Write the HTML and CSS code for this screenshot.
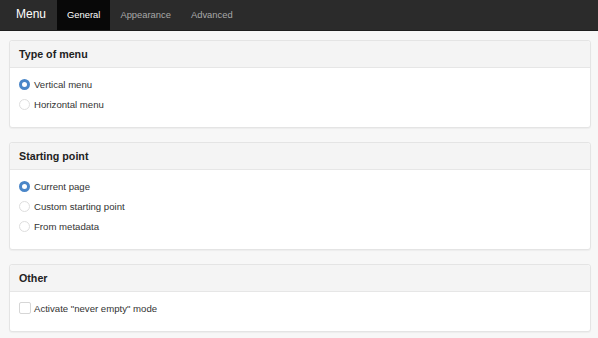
FILE: index.html
```html
<!DOCTYPE html>
<html lang="en">
<head>
  <meta charset="UTF-8" />
  <title>Menu</title>
  <link rel="stylesheet" href="styles.css">
</head>
<body>
  <nav class="navbar">
    <span class="brand">Menu</span>
    <a class="tab active">General</a>
    <a class="tab">Appearance</a>
    <a class="tab">Advanced</a>
  </nav>

  <div class="content">
    <div class="panel">
      <div class="panel-heading">Type of menu</div>
      <div class="panel-body">
        <label class="option"><span class="radio checked"></span>Vertical menu</label>
        <label class="option"><span class="radio"></span>Horizontal menu</label>
      </div>
    </div>

    <div class="panel">
      <div class="panel-heading">Starting point</div>
      <div class="panel-body">
        <label class="option"><span class="radio checked"></span>Current page</label>
        <label class="option"><span class="radio"></span>Custom starting point</label>
        <label class="option"><span class="radio"></span>From metadata</label>
      </div>
    </div>

    <div class="panel">
      <div class="panel-heading">Other</div>
      <div class="panel-body">
        <label class="option"><span class="checkbox"></span>Activate "never empty" mode</label>
      </div>
    </div>
  </div>
</body>
</html>
```

FILE: styles.css
```css
html, body {
  margin: 0;
  padding: 0;
}

body {
  font-family: "Liberation Sans", Arial, sans-serif;
  background-color: #f7f7f7;
  color: #333;
  width: 598px;
  height: 338px;
  overflow: hidden;
}

.navbar {
  display: flex;
  align-items: stretch;
  height: 30px;
  background-color: #2b2b2b;
  border-bottom: 1px solid #1e1e1e;
}

.brand {
  display: flex;
  align-items: center;
  padding: 0 11px 2px 16px;
  font-size: 12px;
  color: #fff;
}

.tab {
  display: flex;
  align-items: center;
  padding: 0 10px 2px;
  font-size: 9.4px;
  color: #a8a8a8;
}

.tab.active {
  background-color: #080808;
  color: #fff;
}

.content {
  display: flex;
  flex-direction: column;
  gap: 14px;
  padding: 9px 7px 0 9px;
}

.panel {
  background: #fff;
  border: 1px solid #e4e4e4;
  border-radius: 3px;
  box-shadow: 0 1px 1px rgba(0, 0, 0, 0.04);
}

.panel-heading {
  height: 26px;
  display: flex;
  align-items: center;
  padding-left: 9px;
  background: #f4f4f4;
  border-bottom: 1px solid #e6e6e6;
  border-radius: 3px 3px 0 0;
  font-size: 10.7px;
  font-weight: bold;
  color: #222;
}

.panel-body {
  padding: 6px 0 13px 9px;
}

.option {
  display: flex;
  align-items: center;
  height: 20px;
  font-size: 9.6px;
  color: #333;
}

.radio {
  width: 9px;
  height: 9px;
  border: 1px solid #dedede;
  border-radius: 50%;
  margin-right: 4px;
  background: #fff;
}

.radio.checked {
  width: 5px;
  height: 5px;
  border: 3px solid #4a86c8;
}

.checkbox {
  width: 10px;
  height: 10px;
  border: 1px solid #d6d6d6;
  border-radius: 2px;
  margin-right: 3px;
  background: #fff;
}
```
